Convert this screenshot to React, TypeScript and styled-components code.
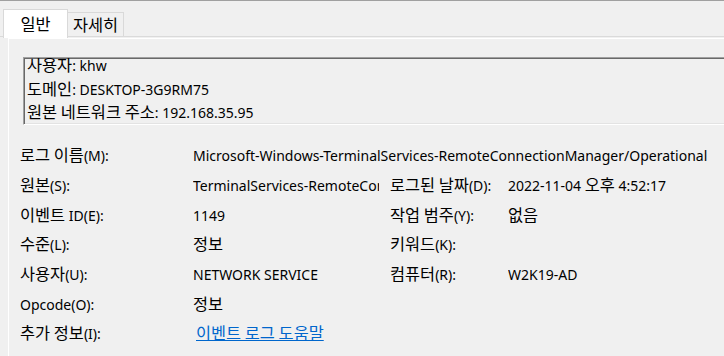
import React from "react";
import styled, { createGlobalStyle } from "styled-components";

const Global = createGlobalStyle`
  html, body { margin: 0; padding: 0; background: #f0f0f0; }
  body { width: 724px; height: 356px; overflow: hidden; }
`;

const FONT = `"Noto Sans", "Noto Sans CJK KR", sans-serif`;

const Hangul = styled.span`
  font-family: "Noto Sans CJK KR", sans-serif;
  font-size: 1.17em;
  line-height: 1;
  letter-spacing: 0;
`;

function T({ children }: { children: string }) {
  const parts = children.split(/([\uAC00-\uD7A3]+(?: [\uAC00-\uD7A3]+)*)/);
  return (
    <>
      {parts.map((p, i) =>
        /[\uAC00-\uD7A3]/.test(p) ? <Hangul key={i}>{p}</Hangul> : <React.Fragment key={i}>{p}</React.Fragment>
      )}
    </>
  );
}

const Window = styled.div`
  width: 724px;
  height: 356px;
  background: #f0f0f0;
  border-top: 1px solid #a0a0a0;
  box-sizing: border-box;
  font-family: ${FONT};
  font-size: 14px;
  color: #000;
  overflow: hidden;
  display: flex;
  flex-direction: column;
`;

const TabStrip = styled.div`
  height: 35px;
  display: flex;
  align-items: flex-end;
  padding-left: 3px;
  box-sizing: border-box;
`;

const Tab = styled.div<{ $active?: boolean }>`
  box-sizing: border-box;
  display: flex;
  align-items: center;
  justify-content: center;
  border: 1px solid #d9d9d9;
  border-bottom: none;
  background: ${(p) => (p.$active ? "#ffffff" : "#f0f0f0")};
  width: ${(p) => (p.$active ? "65px" : "57px")};
  height: ${(p) => (p.$active ? "29px" : "24px")};
  margin-bottom: ${(p) => (p.$active ? "-2px" : "0")};
  position: relative;
  z-index: ${(p) => (p.$active ? 2 : 1)};
  padding-bottom: ${(p) => (p.$active ? "2px" : "0")};
  margin-left: ${(p) => (p.$active ? "0" : "-1px")};
`;

const Pane = styled.div`
  flex: 1;
  border-top: 1px solid #dadada;
  padding-left: 8px;
  display: flex;
  flex-direction: column;
`;

const Page = styled.div`
  flex: 1;
  border-top: 1px solid #ffffff;
  border-left: 1px solid #ffffff;
  margin-top: 1px;
  padding: 18px 0 0 14px;
  display: flex;
  flex-direction: column;
`;

const DescBox = styled.div`
  height: 68px;
  box-sizing: border-box;
  border-top: 1px solid #a0a0a0;
  border-left: 1px solid #a0a0a0;
  border-bottom: 1px solid #ffffff;
  box-shadow: inset 1px 1px 0 #696969, inset 0 -1px 0 #e3e3e3;
  overflow: hidden;
  padding-left: 3px;
  margin-right: -10px;
`;

const DescText = styled.div`
  margin-top: -4px;
  line-height: 23.5px;
`;

const Fields = styled.div`
  display: grid;
  grid-template-columns: 173px 186px 11px 118px 1fr;
  grid-auto-rows: 29.7px;
  align-items: center;
  margin: 16px 0 0 -3px;
`;

const Label = styled.div<{ $col?: number }>`
  grid-column: ${(p) => p.$col ?? 1};
  white-space: nowrap;
`;

const Value = styled.div<{ $col?: number; $span?: number }>`
  grid-column: ${(p) => `${p.$col ?? 2} / span ${p.$span ?? 1}`};
  white-space: nowrap;
  overflow: hidden;
`;

const Link = styled.a`
  color: #0066cc;
  text-decoration: underline;
  margin-left: 3px;
  cursor: pointer;
`;

export default function App() {
  return (
    <>
      <Global />
      <Window>
        <TabStrip>
          <Tab $active><T>일반</T></Tab>
          <Tab><T>자세히</T></Tab>
        </TabStrip>
        <Pane>
          <Page>
            <DescBox>
              <DescText>
                <div><T>사용자: khw</T></div>
                <div><T>도메인: DESKTOP-3G9RM75</T></div>
                <div><T>원본 네트워크 주소: 192.168.35.95</T></div>
              </DescText>
            </DescBox>
            <Fields>
              <Label><T>로그 이름(M):</T></Label>
              <Value $span={4}>Microsoft-Windows-TerminalServices-RemoteConnectionManager/Operational</Value>
              <Label><T>원본(S):</T></Label>
              <Value>TerminalServices-RemoteConnectionManager</Value>
              <Label $col={4}><T>로그된 날짜(D):</T></Label>
              <Value $col={5}><T>2022-11-04 오후 4:52:17</T></Value>
              <Label><T>이벤트 ID(E):</T></Label>
              <Value>1149</Value>
              <Label $col={4}><T>작업 범주(Y):</T></Label>
              <Value $col={5}><T>없음</T></Value>
              <Label><T>수준(L):</T></Label>
              <Value><T>정보</T></Value>
              <Label $col={4}><T>키워드(K):</T></Label>
              <Value $col={5}></Value>
              <Label><T>사용자(U):</T></Label>
              <Value>NETWORK SERVICE</Value>
              <Label $col={4}><T>컴퓨터(R):</T></Label>
              <Value $col={5}>W2K19-AD</Value>
              <Label>Opcode(O):</Label>
              <Value><T>정보</T></Value>
              <Label><T>추가 정보(I):</T></Label>
              <Value>
                <Link><T>이벤트 로그 도움말</T></Link>
              </Value>
            </Fields>
          </Page>
        </Pane>
      </Window>
    </>
  );
}
